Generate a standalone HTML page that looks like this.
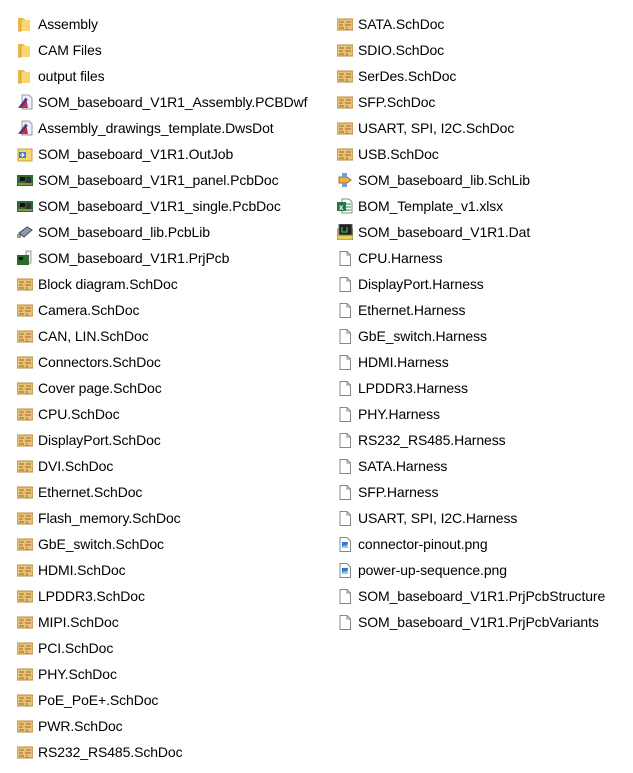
<!DOCTYPE html>
<html><head><meta charset="utf-8"><style>
body{margin:0;width:633px;height:773px;background:#fff;position:relative;overflow:hidden;font-family:"Liberation Sans",sans-serif;font-size:14px;color:#000}
.r{position:absolute;height:26px;line-height:24px;white-space:nowrap}
.i{position:absolute;left:0;top:4px;width:16px;height:16px}
.t{position:absolute;left:21px;top:0;letter-spacing:-0.1px}
</style></head><body>
<svg width="0" height="0" style="position:absolute">
<defs>
<symbol id="fold" viewBox="0 0 16 16"><path d="M1 2h5l1 1h1v12H1z" fill="#e8b64a"/><path d="M4 4h9v11H4z" fill="#f8d775"/><path d="M1 15h3V4" fill="none" stroke="#d9a53a"/></symbol>
<symbol id="sch" viewBox="0 0 16 16"><rect x="0" y="3" width="16" height="11" fill="#e9c27a" stroke="#b88a3a"/><path d="M2 6h5M9 6h5M2 9h4M8 9h6M2 12h5M10 11v3" stroke="#9a6a24" stroke-width="1"/></symbol>
<symbol id="doc" viewBox="0 0 16 16"><path d="M3 1.5h7l3.5 3.5v10.5h-10.5z" fill="#fff" stroke="#888"/><path d="M10 1.5v3.5h3.5" fill="none" stroke="#888"/></symbol>
<symbol id="png" viewBox="0 0 16 16"><path d="M3 1.5h7l3.5 3.5v10.5h-10.5z" fill="#fff" stroke="#888"/><rect x="5" y="6" width="6" height="6" fill="#2a7bd0"/><path d="M5 11l2-2 2 1 2-3v5H5z" fill="#9cd"/></symbol>
<symbol id="pcb" viewBox="0 0 16 16"><rect x="0" y="3" width="16" height="11" fill="#2b6b2f"/><rect x="3" y="5" width="5" height="4" fill="#111"/><rect x="9" y="5" width="5" height="6" fill="#333"/><path d="M1 12h14" stroke="#d8c050"/></symbol>
<symbol id="dwf" viewBox="0 0 16 16"><path d="M5 1h7l3 3v11H5z" fill="#eef" stroke="#999"/><path d="M1 14L9 3l2 11z" fill="#c03040"/><path d="M3 13L10 5" stroke="#2244aa" stroke-width="2"/></symbol>
</defs></svg>

<div class="r" style="left:17px;top:12px"><svg class="i"><use href="#fold"/></svg><span class="t">Assembly</span></div>
<div class="r" style="left:17px;top:38px"><svg class="i"><use href="#fold"/></svg><span class="t">CAM Files</span></div>
<div class="r" style="left:17px;top:64px"><svg class="i"><use href="#fold"/></svg><span class="t">output files</span></div>
<div class="r" style="left:17px;top:90px"><svg class="i"><use href="#dwf"/></svg><span class="t">SOM_baseboard_V1R1_Assembly.PCBDwf</span></div>
<div class="r" style="left:17px;top:116px"><svg class="i"><use href="#dwf"/></svg><span class="t">Assembly_drawings_template.DwsDot</span></div>
<div class="r" style="left:17px;top:142px"><svg class="i" viewBox="0 0 16 16"><rect x="1" y="3" width="14" height="12" fill="#f5d76e" stroke="#c9a23c"/><rect x="2" y="6" width="7" height="6" fill="#3a7bd5"/><path d="M3 9h4M5 7l2 2-2 2" stroke="#fff" fill="none"/></svg><span class="t">SOM_baseboard_V1R1.OutJob</span></div>
<div class="r" style="left:17px;top:168px"><svg class="i"><use href="#pcb"/></svg><span class="t">SOM_baseboard_V1R1_panel.PcbDoc</span></div>
<div class="r" style="left:17px;top:194px"><svg class="i"><use href="#pcb"/></svg><span class="t">SOM_baseboard_V1R1_single.PcbDoc</span></div>
<div class="r" style="left:17px;top:220px"><svg class="i" viewBox="0 0 16 16"><path d="M2 9l8-6 5 3-8 7z" fill="#8a9bb0" stroke="#445"/><path d="M0 11h4M0 13h4" stroke="#333"/></svg><span class="t">SOM_baseboard_lib.PcbLib</span></div>
<div class="r" style="left:17px;top:246px"><svg class="i" viewBox="0 0 16 16"><path d="M9 1h5v12H9z" fill="#eee" stroke="#999"/><rect x="0" y="5" width="12" height="10" fill="#2b6b2f"/><rect x="2" y="7" width="4" height="3" fill="#111"/></svg><span class="t">SOM_baseboard_V1R1.PrjPcb</span></div>
<div id="c1"></div>
<script>
var a=["Block diagram","Camera","CAN, LIN","Connectors","Cover page","CPU","DisplayPort","DVI","Ethernet","Flash_memory","GbE_switch","HDMI","LPDDR3","MIPI","PCI","PHY","PoE_PoE+","PWR","RS232_RS485"];
var h="";
a.forEach(function(n,k){h+='<div class="r" style="left:17px;top:'+(272+26*k)+'px"><svg class="i"><use href="#sch"/></svg><span class="t">'+n+'.SchDoc</span></div>';});
var b=["SATA","SDIO","SerDes","SFP","USART, SPI, I2C","USB"];
b.forEach(function(n,k){h+='<div class="r" style="left:337px;top:'+(12+26*k)+'px"><svg class="i"><use href="#sch"/></svg><span class="t">'+n+'.SchDoc</span></div>';});
var c=["CPU","DisplayPort","Ethernet","GbE_switch","HDMI","LPDDR3","PHY","RS232_RS485","SATA","SFP","USART, SPI, I2C"];
c.forEach(function(n,k){h+='<div class="r" style="left:337px;top:'+(246+26*k)+'px"><svg class="i"><use href="#doc"/></svg><span class="t">'+n+'.Harness</span></div>';});
var d=[["png","connector-pinout.png"],["png","power-up-sequence.png"],["doc","SOM_baseboard_V1R1.PrjPcbStructure"],["doc","SOM_baseboard_V1R1.PrjPcbVariants"]];
d.forEach(function(n,k){h+='<div class="r" style="left:337px;top:'+(532+26*k)+'px"><svg class="i"><use href="#'+n[0]+'"/></svg><span class="t">'+n[1]+'</span></div>';});
document.getElementById("c1").outerHTML=h;
</script>
<div class="r" style="left:337px;top:168px"><svg class="i" viewBox="0 0 16 16"><path d="M2 5h8l4 3-4 3H2z" fill="#f0b040" stroke="#a07020"/><rect x="5" y="1" width="5" height="4" fill="#6aa0e0"/><rect x="5" y="11" width="5" height="4" fill="#6aa0e0"/></svg><span class="t">SOM_baseboard_lib.SchLib</span></div>
<div class="r" style="left:337px;top:194px"><svg class="i" viewBox="0 0 16 16"><path d="M5 1h7l3 3v11H5z" fill="#fff" stroke="#888"/><path d="M9 6h5M9 9h5M9 12h5" stroke="#2a8a4a"/><rect x="0" y="4" width="9" height="9" fill="#1f7a40"/><text x="2" y="12" font-size="8" fill="#fff" font-family="Liberation Sans" font-weight="bold">x</text></svg><span class="t">BOM_Template_v1.xlsx</span></div>
<div class="r" style="left:337px;top:220px"><svg class="i" viewBox="0 0 16 16"><rect x="0" y="5" width="16" height="11" fill="#e8d050" stroke="#886"/><rect x="2" y="0" width="13" height="11" fill="#222" stroke="#666"/><path d="M5 3v5h5V3" stroke="#4c4" fill="none"/></svg><span class="t">SOM_baseboard_V1R1.Dat</span></div>
</body></html>
